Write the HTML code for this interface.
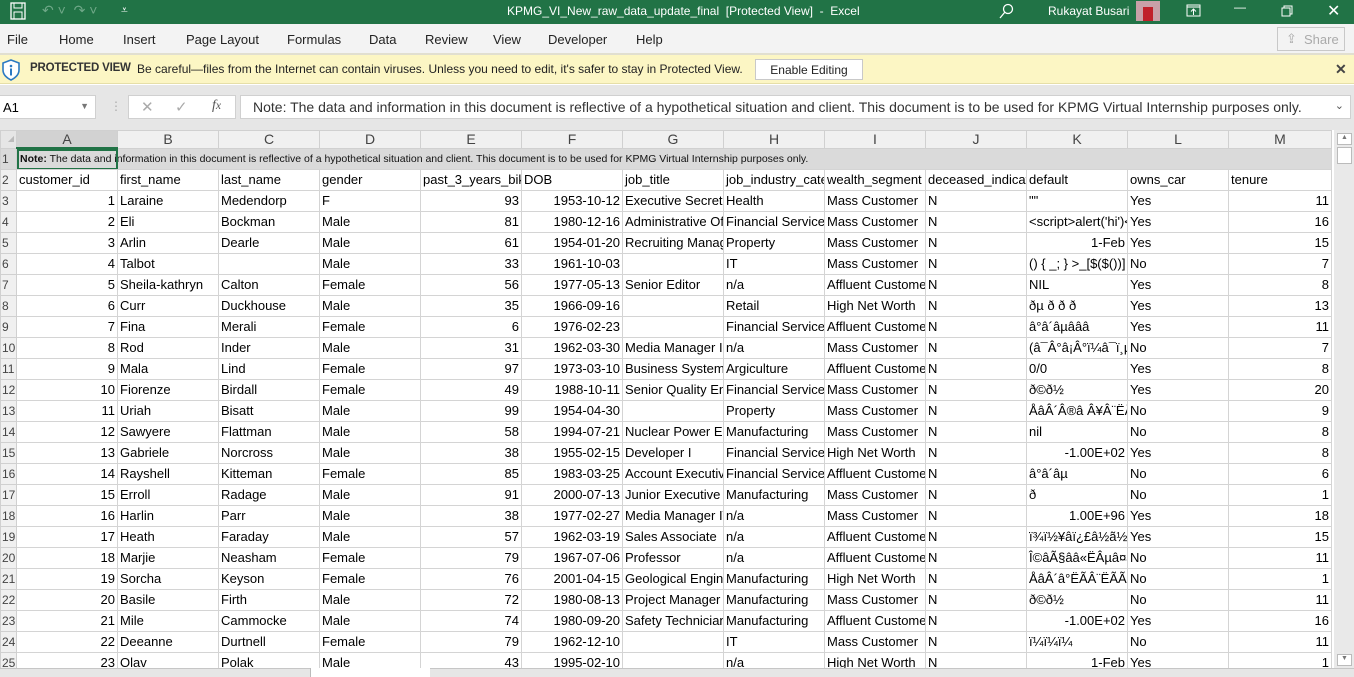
<!DOCTYPE html>
<html><head><meta charset="utf-8"><style>
*{margin:0;padding:0;box-sizing:border-box}
body{width:1354px;height:677px;overflow:hidden;background:#fff;font-family:"Liberation Sans",sans-serif;position:relative}
.title{position:absolute;left:0;top:0;width:1354px;height:24px;background:#217346;color:#fff;font-size:12px}
.title span{position:absolute;top:4px}
.menu{position:absolute;top:24px;left:0;width:1354px;height:31px;background:#f3f3f3;font-size:13px;color:#222;border-bottom:2px solid #e1dfd0}
.menu span{position:absolute;top:8px}
.share{position:absolute;right:9px;top:3px;width:68px;height:24px;border:1px solid #c8c8c8;color:#aaa;font-size:13px;padding:4px 0 0 26px;background:#f3f3f3}
.pv{position:absolute;top:55px;left:0;width:1354px;height:29px;background:#fcf6c4;font-size:12px;color:#222;border-bottom:1px solid #e6dfa8}
.pv span{position:absolute;top:7px}
.btn{position:absolute;left:755px;top:4px;width:108px;height:21px;border:1px solid #c9c9c9;background:#fff;font-size:12px;padding-top:3px;text-align:center}
.fbar{position:absolute;top:85px;left:0;width:1354px;height:45px;background:#e6e6e6}
.box{position:absolute;background:#fff;border:1px solid #d0d0d0}
.grid{position:absolute;left:0;top:130px;width:1334px;overflow:hidden}
table{border-collapse:collapse;table-layout:fixed;width:1331px;font-family:"Liberation Sans",sans-serif;font-size:13px;color:#000}
td{height:21px;border:1px solid #d4d4d4;white-space:nowrap;overflow:hidden;padding:0 2px;line-height:20px}
td.r{text-align:right}
tr.h td{height:17px;background:#f0f0f0;color:#444;text-align:center;font-size:14px;line-height:16px;border-color:#d0d0d0}
td.rh{background:#f0f0f0;color:#444;padding:0 0 0 1px;font-size:12px;border-color:#d0d0d0;text-overflow:clip}
tr.n td{background:#dadada}
</style></head><body>
<div class="title">
<svg style="position:absolute;left:10px;top:2px" width="16" height="18" viewBox="0 0 16 18"><rect x="1" y="1" width="14" height="16" fill="none" stroke="#fff" stroke-width="1.3"/><rect x="4" y="1" width="8" height="5" fill="none" stroke="#fff"/><rect x="4" y="10" width="8" height="7" fill="none" stroke="#fff"/></svg>
<span style="left:42px;top:2px;color:#6fa888;font-size:14px">↶ ˅ &nbsp;↷ ˅</span>
<span style="left:121px;top:3px">⩡</span>
<span style="left:507px">KPMG_VI_New_raw_data_update_final &nbsp;[Protected View] &nbsp;- &nbsp;Excel</span>
<svg style="position:absolute;left:999px;top:3px" width="16" height="16"><circle cx="9" cy="6" r="4.5" fill="none" stroke="#fff" stroke-width="1.3"/><line x1="6" y1="9" x2="1" y2="15" stroke="#fff" stroke-width="1.3"/></svg>
<span style="left:1048px">Rukayat Busari</span>
<div style="position:absolute;left:1136px;top:1px;width:24px;height:20px;background:#c9a0a8"><div style="margin:6px 0 0 7px;width:10px;height:14px;background:#c0202a"></div></div>
<svg style="position:absolute;left:1186px;top:4px" width="15" height="13"><rect x="1" y="1" width="13" height="11" fill="none" stroke="#fff"/><line x1="1" y1="3" x2="14" y2="3" stroke="#fff"/><path d="M7.5 11V5M5 7.5l2.5-2.5 2.5 2.5" fill="none" stroke="#fff"/></svg>
<span style="left:1234px;top:0">—</span>
<svg style="position:absolute;left:1281px;top:5px" width="12" height="12"><rect x="1" y="3" width="8" height="8" fill="none" stroke="#fff"/><path d="M3 3V1h8v8H9" fill="none" stroke="#fff"/></svg>
<span style="left:1327px;top:1px;font-size:16px">✕</span>
</div>
<div class="menu">
<span style="left:7px">File</span><span style="left:59px">Home</span><span style="left:123px">Insert</span><span style="left:186px">Page Layout</span><span style="left:287px">Formulas</span><span style="left:369px">Data</span><span style="left:425px">Review</span><span style="left:493px">View</span><span style="left:548px">Developer</span><span style="left:636px">Help</span>
<div class="share">Share<span style="left:8px;top:3px;position:absolute">⇪</span></div>
</div>
<div class="pv">
<svg style="position:absolute;left:1px;top:4px" width="20" height="22"><path d="M10 1 L18 4 V11 C18 16 14 19 10 21 C6 19 2 16 2 11 V4 Z" fill="#fff" stroke="#2b79c2" stroke-width="1.6"/><circle cx="10" cy="7" r="1.3" fill="#2b79c2"/><rect x="9" y="9.5" width="2" height="7" fill="#2b79c2"/></svg>
<span style="left:30px;font-weight:bold;color:#333;font-size:11.5px;letter-spacing:-0.2px">PROTECTED VIEW</span>
<span style="left:137px">Be careful—files from the Internet can contain viruses. Unless you need to edit, it's safer to stay in Protected View.</span>
<div class="btn">Enable Editing</div>
<span style="left:1335px;top:6px;font-size:14px;font-weight:bold;color:#444">✕</span>
</div>
<div class="fbar">
<div class="box" style="left:-1px;top:10px;width:97px;height:24px;font-size:13px;padding:4px 0 0 3px">A1<span style="position:absolute;right:6px;top:5px;font-size:9px;color:#777">▼</span></div>
<span style="position:absolute;left:110px;top:14px;color:#aaa;font-size:12px">⋮</span>
<div class="box" style="left:128px;top:10px;width:108px;height:24px;color:#aaa;font-size:15px"><span style="position:absolute;left:12px;top:2px">✕</span><span style="position:absolute;left:46px;top:2px">✓</span><span style="position:absolute;left:83px;top:2px;font-family:'Liberation Serif',serif;font-style:italic;color:#555;font-size:14px">f<small>x</small></span></div>
<div class="box" style="left:240px;top:10px;width:1111px;height:24px;font-size:14px;color:#333;padding:3px 0 0 12px">Note: The data and information in this document is reflective of a hypothetical situation and client. This document is to be used for KPMG Virtual Internship purposes only.<span style="position:absolute;right:6px;top:3px;font-size:11px;color:#555">⌄</span></div>
</div>
<div style="position:absolute;left:1334px;top:130px;width:20px;height:547px;background:#e9e9e9"></div>
<div style="position:absolute;left:1337px;top:133px;width:15px;height:12px;background:#fff;border:1px solid #bbb;font-size:7px;text-align:center;color:#777">▲</div>
<div style="position:absolute;left:1337px;top:147px;width:15px;height:17px;background:#fff;border:1px solid #bbb"></div>
<div style="position:absolute;left:1337px;top:654px;width:15px;height:12px;background:#fff;border:1px solid #bbb;font-size:7px;text-align:center;color:#777">▼</div>
<div class="grid">
<table>
<colgroup><col style="width:16px"><col style="width:101px"><col style="width:101px"><col style="width:101px"><col style="width:101px"><col style="width:101px"><col style="width:101px"><col style="width:101px"><col style="width:101px"><col style="width:101px"><col style="width:101px"><col style="width:101px"><col style="width:101px"><col style="width:103px"></colgroup>
<tr class="h"><td style="background:#e6e6e6;color:#bbb;font-size:8px;text-align:right">◢</td><td style="background:#d2d2d2;border-bottom:2px solid #217346">A</td><td>B</td><td>C</td><td>D</td><td>E</td><td>F</td><td>G</td><td>H</td><td>I</td><td>J</td><td>K</td><td>L</td><td>M</td></tr>
<tr class="n"><td class="rh">1</td><td colspan="13" style="font-size:10.5px;color:#111;padding-left:3px;position:relative"><b>Note:</b> The data and information in this document is reflective of a hypothetical situation and client. This document is to be used for KPMG Virtual Internship purposes only.<div style="position:absolute;left:0;top:0;width:101px;height:21px;border:2px solid #217346"></div></td></tr>
<tr><td class="rh">2</td><td>customer_id</td><td>first_name</td><td>last_name</td><td>gender</td><td>past_3_years_bike_related_purchases</td><td>DOB</td><td>job_title</td><td>job_industry_category</td><td>wealth_segment</td><td>deceased_indicator</td><td>default</td><td>owns_car</td><td>tenure</td></tr>
<tr><td class="rh">3</td><td class="r">1</td><td>Laraine</td><td>Medendorp</td><td>F</td><td class="r">93</td><td class="r">1953-10-12</td><td>Executive Secretary</td><td>Health</td><td>Mass Customer</td><td>N</td><td>""</td><td>Yes</td><td class="r">11</td></tr>
<tr><td class="rh">4</td><td class="r">2</td><td>Eli</td><td>Bockman</td><td>Male</td><td class="r">81</td><td class="r">1980-12-16</td><td>Administrative Officer</td><td>Financial Services</td><td>Mass Customer</td><td>N</td><td>&lt;script&gt;alert('hi')&lt;/script&gt;</td><td>Yes</td><td class="r">16</td></tr>
<tr><td class="rh">5</td><td class="r">3</td><td>Arlin</td><td>Dearle</td><td>Male</td><td class="r">61</td><td class="r">1954-01-20</td><td>Recruiting Manager</td><td>Property</td><td>Mass Customer</td><td>N</td><td class="r">1-Feb</td><td>Yes</td><td class="r">15</td></tr>
<tr><td class="rh">6</td><td class="r">4</td><td>Talbot</td><td></td><td>Male</td><td class="r">33</td><td class="r">1961-10-03</td><td></td><td>IT</td><td>Mass Customer</td><td>N</td><td>() { _; } &gt;_[$($())] { touch</td><td>No</td><td class="r">7</td></tr>
<tr><td class="rh">7</td><td class="r">5</td><td>Sheila-kathryn</td><td>Calton</td><td>Female</td><td class="r">56</td><td class="r">1977-05-13</td><td>Senior Editor</td><td>n/a</td><td>Affluent Customer</td><td>N</td><td>NIL</td><td>Yes</td><td class="r">8</td></tr>
<tr><td class="rh">8</td><td class="r">6</td><td>Curr</td><td>Duckhouse</td><td>Male</td><td class="r">35</td><td class="r">1966-09-16</td><td></td><td>Retail</td><td>High Net Worth</td><td>N</td><td>ðµ ð ð ð</td><td>Yes</td><td class="r">13</td></tr>
<tr><td class="rh">9</td><td class="r">7</td><td>Fina</td><td>Merali</td><td>Female</td><td class="r">6</td><td class="r">1976-02-23</td><td></td><td>Financial Services</td><td>Affluent Customer</td><td>N</td><td>â°â´âµâââ</td><td>Yes</td><td class="r">11</td></tr>
<tr><td class="rh">10</td><td class="r">8</td><td>Rod</td><td>Inder</td><td>Male</td><td class="r">31</td><td class="r">1962-03-30</td><td>Media Manager I</td><td>n/a</td><td>Mass Customer</td><td>N</td><td>(â¯Â°â¡Â°ï¼â¯ï¸µ</td><td>No</td><td class="r">7</td></tr>
<tr><td class="rh">11</td><td class="r">9</td><td>Mala</td><td>Lind</td><td>Female</td><td class="r">97</td><td class="r">1973-03-10</td><td>Business Systems</td><td>Argiculture</td><td>Affluent Customer</td><td>N</td><td>0/0</td><td>Yes</td><td class="r">8</td></tr>
<tr><td class="rh">12</td><td class="r">10</td><td>Fiorenze</td><td>Birdall</td><td>Female</td><td class="r">49</td><td class="r">1988-10-11</td><td>Senior Quality Engineer</td><td>Financial Services</td><td>Mass Customer</td><td>N</td><td>ð©ð½</td><td>Yes</td><td class="r">20</td></tr>
<tr><td class="rh">13</td><td class="r">11</td><td>Uriah</td><td>Bisatt</td><td>Male</td><td class="r">99</td><td class="r">1954-04-30</td><td></td><td>Property</td><td>Mass Customer</td><td>N</td><td>ÅâÂ´Â®â Â¥Â¨ËÃ</td><td>No</td><td class="r">9</td></tr>
<tr><td class="rh">14</td><td class="r">12</td><td>Sawyere</td><td>Flattman</td><td>Male</td><td class="r">58</td><td class="r">1994-07-21</td><td>Nuclear Power Engineer</td><td>Manufacturing</td><td>Mass Customer</td><td>N</td><td>nil</td><td>No</td><td class="r">8</td></tr>
<tr><td class="rh">15</td><td class="r">13</td><td>Gabriele</td><td>Norcross</td><td>Male</td><td class="r">38</td><td class="r">1955-02-15</td><td>Developer I</td><td>Financial Services</td><td>High Net Worth</td><td>N</td><td class="r">-1.00E+02</td><td>Yes</td><td class="r">8</td></tr>
<tr><td class="rh">16</td><td class="r">14</td><td>Rayshell</td><td>Kitteman</td><td>Female</td><td class="r">85</td><td class="r">1983-03-25</td><td>Account Executive</td><td>Financial Services</td><td>Affluent Customer</td><td>N</td><td>â°â´âµ</td><td>No</td><td class="r">6</td></tr>
<tr><td class="rh">17</td><td class="r">15</td><td>Erroll</td><td>Radage</td><td>Male</td><td class="r">91</td><td class="r">2000-07-13</td><td>Junior Executive</td><td>Manufacturing</td><td>Mass Customer</td><td>N</td><td>ð</td><td>No</td><td class="r">1</td></tr>
<tr><td class="rh">18</td><td class="r">16</td><td>Harlin</td><td>Parr</td><td>Male</td><td class="r">38</td><td class="r">1977-02-27</td><td>Media Manager IV</td><td>n/a</td><td>Mass Customer</td><td>N</td><td class="r">1.00E+96</td><td>Yes</td><td class="r">18</td></tr>
<tr><td class="rh">19</td><td class="r">17</td><td>Heath</td><td>Faraday</td><td>Male</td><td class="r">57</td><td class="r">1962-03-19</td><td>Sales Associate</td><td>n/a</td><td>Affluent Customer</td><td>N</td><td>ï¾ï½¥âï¿£â½ã½</td><td>Yes</td><td class="r">15</td></tr>
<tr><td class="rh">20</td><td class="r">18</td><td>Marjie</td><td>Neasham</td><td>Female</td><td class="r">79</td><td class="r">1967-07-06</td><td>Professor</td><td>n/a</td><td>Affluent Customer</td><td>N</td><td>Î©âÃ§ââ«ËÂµâ¤â</td><td>No</td><td class="r">11</td></tr>
<tr><td class="rh">21</td><td class="r">19</td><td>Sorcha</td><td>Keyson</td><td>Female</td><td class="r">76</td><td class="r">2001-04-15</td><td>Geological Engineer</td><td>Manufacturing</td><td>High Net Worth</td><td>N</td><td>ÅâÂ´â°ËÃÂ¨ËÃÃ</td><td>No</td><td class="r">1</td></tr>
<tr><td class="rh">22</td><td class="r">20</td><td>Basile</td><td>Firth</td><td>Male</td><td class="r">72</td><td class="r">1980-08-13</td><td>Project Manager</td><td>Manufacturing</td><td>Mass Customer</td><td>N</td><td>ð©ð½</td><td>No</td><td class="r">11</td></tr>
<tr><td class="rh">23</td><td class="r">21</td><td>Mile</td><td>Cammocke</td><td>Male</td><td class="r">74</td><td class="r">1980-09-20</td><td>Safety Technician</td><td>Manufacturing</td><td>Affluent Customer</td><td>N</td><td class="r">-1.00E+02</td><td>Yes</td><td class="r">16</td></tr>
<tr><td class="rh">24</td><td class="r">22</td><td>Deeanne</td><td>Durtnell</td><td>Female</td><td class="r">79</td><td class="r">1962-12-10</td><td></td><td>IT</td><td>Mass Customer</td><td>N</td><td>ï¼ï¼ï¼</td><td>No</td><td class="r">11</td></tr>
<tr><td class="rh">25</td><td class="r">23</td><td>Olav</td><td>Polak</td><td>Male</td><td class="r">43</td><td class="r">1995-02-10</td><td></td><td>n/a</td><td>High Net Worth</td><td>N</td><td class="r">1-Feb</td><td>Yes</td><td class="r">1</td></tr>
</table>
</div>
<div style="position:absolute;left:0;top:668px;width:1354px;height:9px;background:#e6e6e6;border-top:1px solid #c6c6c6"></div>
<div style="position:absolute;left:310px;top:668px;width:120px;height:9px;background:#fff;border-left:1px solid #bbb"></div>
</body></html>
